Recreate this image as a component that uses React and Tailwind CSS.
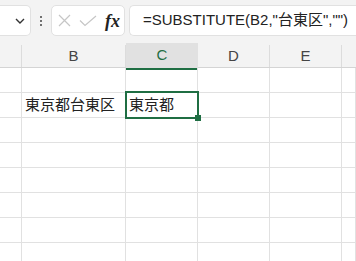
import React from "react";

const cols = [
  { key: "A", w: "w-[22px]" },
  { key: "B", w: "w-[104px]" },
  { key: "C", w: "w-[72px]" },
  { key: "D", w: "w-[72px]" },
  { key: "E", w: "w-[72px]" },
  { key: "F", w: "flex-1" },
];

const data = { "2B": "東京都台東区", "2C": "東京都" };

const font = { fontFamily: '"Liberation Sans", "Noto Sans CJK JP", sans-serif' };

export default function App() {
  const rows = [1, 2, 3, 4, 5, 6, 7, 8];
  return (
    <div className="w-[356px] h-[261px] overflow-hidden bg-white" style={font}>
      {/* Formula bar */}
      <div className="h-[40px] bg-[#f3f3f3] flex items-start pt-[5px]">
        <div className="w-[31px] h-[31px] bg-white border border-l-0 border-[#e1e1e1] rounded-r-[5px] flex items-center justify-end pr-[5px]">
          <svg width="10" height="6" viewBox="0 0 10 6">
            <path d="M1 1l4 4 4-4" fill="none" stroke="#333" strokeWidth="1.4" />
          </svg>
        </div>
        <div className="w-[20px] h-[31px] flex flex-col items-center justify-center gap-[2px]">
          <span className="w-[2px] h-[2px] bg-[#444] rounded-full" />
          <span className="w-[2px] h-[2px] bg-[#444] rounded-full" />
          <span className="w-[2px] h-[2px] bg-[#444] rounded-full" />
        </div>
        <div className="w-[74px] h-[31px] bg-white border border-[#e1e1e1] rounded-[5px] flex items-center">
          <svg className="ml-[6px]" width="13" height="13" viewBox="0 0 13 13">
            <path d="M1 1l11 11M12 1L1 12" stroke="#c6c6c6" strokeWidth="1.2" />
          </svg>
          <svg className="ml-[8px]" width="18" height="12" viewBox="0 0 18 12">
            <path d="M1 5.5l5 5L17 1" fill="none" stroke="#c6c6c6" strokeWidth="1.2" />
          </svg>
          <span
            className="ml-[8px] text-[18px] italic font-semibold leading-none text-[#222]"
            style={{ fontFamily: '"Liberation Serif", serif' }}
          >
            fx
          </span>
        </div>
        <div className="ml-[4px] flex-1 h-[31px] bg-white border border-r-0 border-[#e1e1e1] rounded-l-[5px] flex items-center pl-[13px]">
          <span className="text-[15px] text-[#222] whitespace-nowrap">=SUBSTITUTE(B2,"台東区","")</span>
        </div>
      </div>

      {/* Column headers */}
      <div className="flex h-[28px] bg-[#f3f3f3] border-b border-[#d4d4d4]">
        {cols.map((c) => {
          const active = c.key === "C";
          return (
            <div
              key={c.key}
              className={`${c.w} h-full flex items-end ${active ? "bg-[#e1e1e1] border-b-2 border-[#1f6e43] mt-[3px] -mb-[1px]" : ""}`}
            >
              <div
                className={`w-full flex items-center justify-center ${active ? "h-full" : "h-[22px]"} ${
                  c.key === "F" ? "" : "border-r border-[#dcdcdc]"
                } ${active ? "text-[#1f6e43] border-r-0" : "text-[#444]"} text-[15px]`}
              >
                {c.key === "A" || c.key === "F" ? "" : c.key}
              </div>
            </div>
          );
        })}
      </div>

      {/* Grid */}
      {rows.map((r) => (
        <div key={r} className="flex">
          {cols.map((c) => {
            const val = data[`${r}${c.key}`];
            const selected = r === 2 && c.key === "C";
            return (
              <div
                key={c.key}
                className={`${c.w} h-[25px] border-b border-r border-[#e1e1e1] relative flex items-center pl-[3px] text-[15px] text-[#222] whitespace-nowrap`}
              >
                {val}
                {selected && (
                  <div className="absolute z-10 left-[-1px] top-[-2px] w-[74px] h-[28px] border-2 border-[#1f6e43]">
                    <div className="absolute right-[-4px] bottom-[-4px] w-[6px] h-[6px] bg-[#1f6e43]" />
                  </div>
                )}
              </div>
            );
          })}
        </div>
      ))}
    </div>
  );
}
